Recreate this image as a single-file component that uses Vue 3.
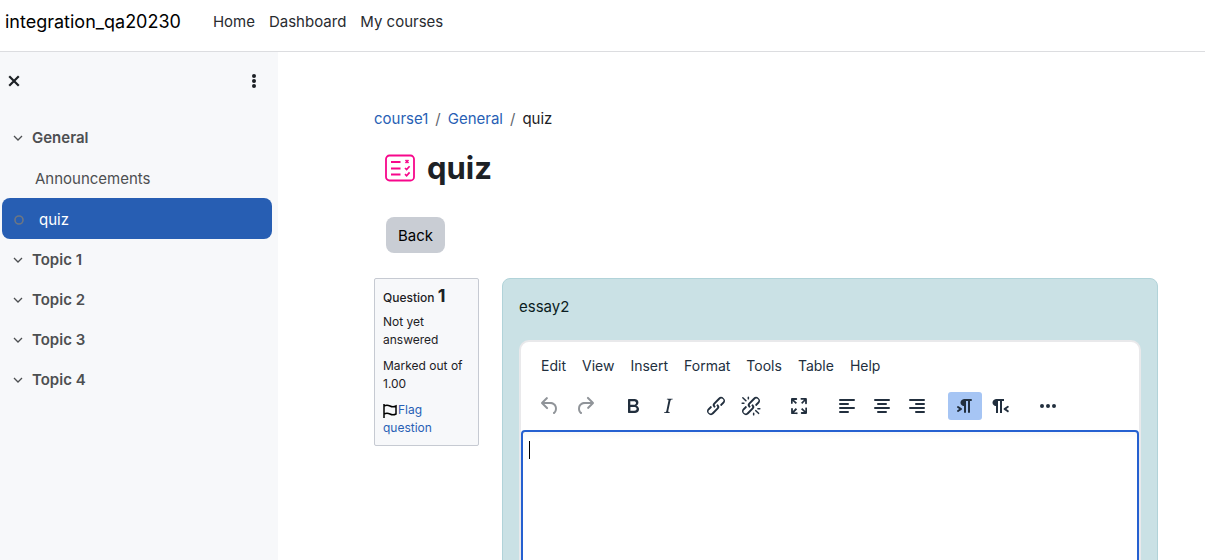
<script setup>
import { ref } from 'vue'

const answer = ref('')
const navLinks = ['Home', 'Dashboard', 'My courses']
const topics = ['Topic 1', 'Topic 2', 'Topic 3', 'Topic 4']
const menus = ['Edit', 'View', 'Insert', 'Format', 'Tools', 'Table', 'Help']

const chain =
  'M6.2 12.3a1 1 0 0 1 1.4 1.4l-2 2a2 2 0 1 0 2.6 2.8l4.8-4.8a1 1 0 0 0 0-1.4 1 1 0 1 1 1.4-1.3 2.9 2.9 0 0 1 0 4L9.6 20a3.9 3.9 0 0 1-5.5-5.5l2-2Zm11.6-.6a1 1 0 0 1-1.4-1.4l2-2a2 2 0 1 0-2.6-2.8L11 10.3a1 1 0 0 0 0 1.4A1 1 0 1 1 9.6 13a2.9 2.9 0 0 1 0-4L14.4 4a3.9 3.9 0 0 1 5.5 5.5l-2 2Z'

const groups = [
  [
    { name: 'Undo', disabled: true, d: 'M6.4 8H12c3.7 0 6.2 2 6.8 5.1.6 2.7-.4 5.6-2.3 6.8a1 1 0 0 1-1-1.8c1.1-.6 1.8-2.7 1.4-4.6-.5-2.1-2.1-3.5-4.9-3.5H6.4l3.3 3.3a1 1 0 1 1-1.4 1.4l-5-5a1 1 0 0 1 0-1.4l5-5a1 1 0 0 1 1.4 1.4L6.4 8Z' },
    { name: 'Redo', disabled: true, d: 'M17.6 10H12c-2.8 0-4.4 1.4-4.9 3.5-.4 2 .3 4 1.4 4.6a1 1 0 1 1-1 1.8c-2-1.2-2.9-4.1-2.3-6.8.6-3 3-5.1 6.8-5.1h5.6l-3.3-3.3a1 1 0 1 1 1.4-1.4l5 5a1 1 0 0 1 0 1.4l-5 5a1 1 0 0 1-1.4-1.4l3.3-3.3Z' },
  ],
  [
    { name: 'Bold', d: 'M7.8 19c-.3 0-.5 0-.6-.2l-.2-.5V5.7c0-.2 0-.4.2-.5l.6-.2h5c1.5 0 2.7.3 3.5 1 .7.6 1.1 1.4 1.1 2.5a3 3 0 0 1-.6 1.9c-.4.6-1 1-1.6 1.2.4.1.9.3 1.3.6s.8.7 1 1.2c.4.4.5 1 .5 1.6 0 1.3-.4 2.3-1.3 3-.8.7-2.1 1-3.8 1H7.8Zm5-8.3c.6 0 1.2-.1 1.6-.5.4-.3.6-.7.6-1.3 0-1.1-.8-1.7-2.3-1.7H9.3v3.5h3.4Zm.5 6c.7 0 1.3-.1 1.7-.4.4-.4.6-.9.6-1.5s-.2-1-.7-1.4c-.4-.3-1-.4-2-.4H9.4v3.8h4Z' },
    { name: 'Italic', d: 'm16.7 4.7-.1.9h-.3c-.6 0-1 0-1.4.3-.3.3-.4.6-.5 1.1l-2.1 9.8v.6c0 .5.4.8 1.4.8h.2l-.2.8H8l.2-.8h.2c1.1 0 1.8-.5 2-1.5l2-9.8.1-.5c0-.6-.4-.8-1.4-.8h-.3l.2-.9h5.8Z' },
  ],
  [
    { name: 'Link', d: chain },
    { name: 'Unlink', d: chain + 'M7.6 6.3a.8.8 0 0 1-1 1.1L3.3 4.2a.7.7 0 1 1 1-1l3.2 3.1ZM5.1 8.6a.8.8 0 0 1 0 1.5H3a.8.8 0 0 1 0-1.5H5Zm5-3.5a.8.8 0 0 1-1.5 0V3a.8.8 0 0 1 1.5 0V5Zm6 11.8a.8.8 0 0 1 1-1l3.2 3.2a.8.8 0 0 1-1 1L16 17Zm-2.2 2a.8.8 0 0 1 1.5 0V21a.8.8 0 0 1-1.5 0V19Zm5-3.5a.7.7 0 1 1 0-1.5H21a.8.8 0 0 1 0 1.5H19Z' },
  ],
  [
    { name: 'Fullscreen', d: 'm15.3 10-1.2-1.3 2.9-3h-2.3a.9.9 0 1 1 0-1.7H19c.5 0 .9.4.9.9v4.4a.9.9 0 1 1-1.8 0V7l-2.9 3Zm0 4 3 3v-2.3a.9.9 0 1 1 1.7 0V19c0 .5-.4.9-.9.9h-4.4a.9.9 0 1 1 0-1.8H17l-3-2.9 1.3-1.2ZM10 15.4l-2.9 3h2.3a.9.9 0 1 1 0 1.7H5a.9.9 0 0 1-.9-.9v-4.4a.9.9 0 1 1 1.8 0V17l2.9-3 1.2 1.3ZM8.7 10 5.7 7v2.3a.9.9 0 0 1-1.7 0V5c0-.5.4-.9.9-.9h4.4a.9.9 0 0 1 0 1.8H7l3 2.9-1.3 1.2Z' },
  ],
  [
    { name: 'Align left', d: 'M5 5h14a1 1 0 0 1 0 2H5a1 1 0 0 1 0-2Zm0 4h8a1 1 0 0 1 0 2H5a1 1 0 0 1 0-2Zm0 4h14a1 1 0 0 1 0 2H5a1 1 0 0 1 0-2Zm0 4h8a1 1 0 0 1 0 2H5a1 1 0 0 1 0-2Z' },
    { name: 'Align center', d: 'M5 5h14a1 1 0 0 1 0 2H5a1 1 0 0 1 0-2Zm3 4h8a1 1 0 0 1 0 2H8a1 1 0 0 1 0-2Zm-3 4h14a1 1 0 0 1 0 2H5a1 1 0 0 1 0-2Zm3 4h8a1 1 0 0 1 0 2H8a1 1 0 0 1 0-2Z' },
    { name: 'Align right', d: 'M5 5h14a1 1 0 0 1 0 2H5a1 1 0 0 1 0-2Zm6 4h8a1 1 0 0 1 0 2h-8a1 1 0 0 1 0-2Zm-6 4h14a1 1 0 0 1 0 2H5a1 1 0 0 1 0-2Zm6 4h8a1 1 0 0 1 0 2h-8a1 1 0 0 1 0-2Z' },
  ],
  [
    { name: 'Left to right', active: true, d: 'M11 5h7a1 1 0 0 1 0 2h-1v11a1 1 0 0 1-2 0V7h-2v11a1 1 0 0 1-2 0v-6c-.5 0-1 0-1.4-.3A3.4 3.4 0 0 1 7.8 10a3.3 3.3 0 0 1 0-2.8 3.4 3.4 0 0 1 1.8-1.8L11 5ZM4.4 16.2 6.2 15l-1.8-1.2a1 1 0 0 1 1.2-1.6l3 2a1 1 0 0 1 0 1.6l-3 2a1 1 0 1 1-1.2-1.6Z' },
    { name: 'Right to left', d: 'M8 5h8v2h-2v12h-2V7h-2v12H8v-7c-.5 0-1 0-1.4-.3A3.4 3.4 0 0 1 4.8 10a3.3 3.3 0 0 1 0-2.8 3.4 3.4 0 0 1 1.8-1.8L8 5Zm12 11.2a1 1 0 1 1-1 1.6l-3-2a1 1 0 0 1 0-1.6l3-2a1 1 0 1 1 1 1.6L18.4 15l1.8 1.2Z' },
  ],
  [
    { name: 'More', d: 'M6 10a2 2 0 1 0 0 4 2 2 0 0 0 0-4Zm6 0a2 2 0 1 0 0 4 2 2 0 0 0 0-4Zm6 0a2 2 0 1 0 0 4 2 2 0 0 0 0-4Z' },
  ],
]
</script>

<template>
  <div class="page">
    <header class="topbar">
      <a class="brand" href="#">integration_qa20230</a>
      <nav class="nav">
        <a v-for="link in navLinks" :key="link" href="#">{{ link }}</a>
      </nav>
    </header>
    <div class="body">
      <aside class="drawer">
        <div class="drawer-head">
          <button type="button" class="plain" aria-label="Close course index">
            <svg width="12" height="12" viewBox="0 0 12 12"><path d="M2 2l8 8M10 2l-8 8" fill="none" stroke="#1d2125" stroke-width="2.2" stroke-linecap="square" /></svg>
          </button>
          <button type="button" class="plain" aria-label="Course index options">
            <svg width="6" height="16" viewBox="0 0 6 16" fill="#1d2125"><circle cx="3" cy="3" r="2" /><circle cx="3" cy="8" r="2" /><circle cx="3" cy="13" r="2" /></svg>
          </button>
        </div>
        <nav class="index" aria-label="Course index">
          <a class="section" href="#">
            <svg width="12" height="12" viewBox="0 0 12 12"><path d="M2 4l4 4 4-4" /></svg>General
          </a>
          <a class="item" href="#">Announcements</a>
          <a class="item current" href="#">
            <svg width="12" height="12" viewBox="0 0 12 12"><circle cx="6" cy="6" r="4" /></svg>quiz
          </a>
          <a v-for="topic in topics" :key="topic" class="section" href="#">
            <svg width="12" height="12" viewBox="0 0 12 12"><path d="M2 4l4 4 4-4" /></svg>{{ topic }}
          </a>
        </nav>
      </aside>
      <main class="content">
        <nav class="crumbs" aria-label="Breadcrumb">
          <a href="#">course1</a><span class="slash">/</span><a href="#">General</a><span class="slash">/</span><span>quiz</span>
        </nav>
        <div class="title">
          <svg width="30" height="28" viewBox="0 0 30 28" fill="none" stroke="#f7078b">
            <rect x="1" y="1.5" width="28" height="25" rx="3.5" stroke-width="1.8" />
            <path d="M6 8h9.5M6 14.5h9.5M6 20.5h9.5" stroke-width="1.8" />
            <path d="M20.5 6l3 3M23.5 6l-3 3" stroke-width="1.6" />
            <path d="M20 14l1.6 1.6 3-3.4M20 20.2l1.6 1.6 3-3.4" stroke-width="1.7" />
          </svg>
          <h1>quiz</h1>
        </div>
        <button type="button" class="back">Back</button>
        <div class="question">
          <section class="info">
            <h2>Question <b>1</b></h2>
            <p>Not yet answered</p>
            <p>Marked out of 1.00</p>
            <a href="#"><svg width="15" height="14" viewBox="0 0 15 14" fill="none" stroke="#000" stroke-width="1.5"><path d="M1 0v14M1 2c2-1 4-1 6 0s4 1 6 0v8c-2 1-4 1-6 0s-4-1-6 0" /></svg>Flag question</a>
          </section>
          <section class="formulation">
            <label for="answer">essay2</label>
            <div class="editor">
              <div class="menubar">
                <button v-for="menu in menus" :key="menu" type="button">{{ menu }}</button>
              </div>
              <div class="toolbar">
                <div v-for="(group, i) in groups" :key="i" class="group">
                  <button v-for="tool in group" :key="tool.name" type="button" :class="{ active: tool.active }" :disabled="tool.disabled" :aria-label="tool.name">
                    <svg width="24" height="24" viewBox="0 0 24 24"><path :d="tool.d" fill-rule="evenodd" /></svg>
                  </button>
                </div>
              </div>
              <div class="edit-area">
                <textarea id="answer" v-model="answer"></textarea>
                <span v-if="!answer" class="caret"></span>
              </div>
            </div>
          </section>
        </div>
      </main>
    </div>
  </div>
</template>

<style>
body {
  margin: 0;
}
</style>

<style scoped>
* {
  box-sizing: border-box;
}
.page {
  height: 100vh;
  overflow: hidden;
  display: flex;
  flex-direction: column;
  background: #fff;
  color: #1d2125;
  font: 15px/24px Inter, "Liberation Sans", sans-serif;
}
a {
  text-decoration: none;
}
button {
  font: inherit;
  color: inherit;
  border: 0;
  padding: 0;
  background: none;
}
.topbar {
  flex: none;
  display: flex;
  align-items: center;
  gap: 32px;
  height: 52px;
  padding: 0 5px 8px;
  border-bottom: 1px solid #dcdde0;
}
.brand {
  font-size: 18px;
  color: #000;
}
.nav {
  display: flex;
  gap: 14px;
}
.nav a {
  color: #282b2f;
}
.body {
  flex: 1;
  min-height: 0;
  display: flex;
}
.drawer {
  flex: none;
  width: 278px;
  background: #f7f8fa;
}
.drawer-head {
  display: flex;
  justify-content: space-between;
  align-items: center;
  height: 58px;
  padding: 0 21px 0 8px;
}
.plain {
  display: flex;
}
.index {
  display: flex;
  flex-direction: column;
  padding: 7px 6px 0 2px;
}
.index a {
  display: flex;
  align-items: center;
  height: 41px;
  padding-top: 2px;
  color: #4d4f51;
}
.index svg {
  fill: none;
  stroke: #4d4f51;
  stroke-width: 1.3;
}
.index .section {
  height: 40px;
  gap: 8px;
  padding-left: 10px;
  font-weight: 600;
}
.index .item {
  padding-left: 33px;
}
.index .current {
  gap: 14px;
  padding-left: 11px;
  border-radius: 8px;
  background: #275eb3;
  color: #fff;
}
.index .current svg {
  stroke: #6d7683;
  stroke-width: 1.6;
}
.content {
  flex: 1;
  min-width: 0;
  padding: 55px 47px 0 96px;
}
.crumbs {
  display: flex;
  gap: 7px;
}
.crumbs a,
.info a {
  color: #285fb5;
}
.slash {
  color: #5f666d;
}
.title {
  display: flex;
  align-items: center;
  gap: 12px;
  padding: 18px 0 0 11px;
}
h1 {
  margin: 0;
  font-size: 31px;
  line-height: 38px;
  font-weight: 700;
}
.back {
  display: block;
  height: 36px;
  margin: 30px 0 25px 12px;
  padding: 2px 12px 0;
  border-radius: 8px;
  background: #c9cdd4;
  color: #000;
}
.question {
  display: flex;
  align-items: flex-start;
  gap: 23px;
}
.info {
  flex: none;
  width: 105px;
  padding: 7px 8px 8px;
  border: 1px solid #c6cad2;
  border-radius: 2px;
  background: #f7f8fa;
  font-size: 12px;
  line-height: 18px;
}
.info h2 {
  margin: 0 0 5px;
  font-size: 12px;
  line-height: 20px;
  font-weight: 500;
}
.info h2 b {
  font-size: 18px;
  font-weight: 700;
}
.info p {
  margin: 0 0 8px;
}
.info svg {
  vertical-align: -4px;
}
.formulation {
  flex: 1;
  min-width: 0;
  padding: 16px;
  border: 1px solid #b1d3d9;
  border-radius: 8px;
  background: #cae1e5;
}
.formulation label {
  display: block;
  color: #0a1d22;
}
.editor {
  margin-top: 21px;
  border: 2px solid #e9e9eb;
  border-radius: 10px;
  background: #fff;
  color: #222f3e;
}
.menubar {
  display: flex;
  padding: 10px 12px 0;
  font-size: 14px;
  line-height: 28px;
}
.menubar button {
  padding: 0 8px;
}
.toolbar {
  display: flex;
  gap: 14px;
  padding: 12px 12px 10px;
}
.group {
  display: flex;
  gap: 1px;
}
.group button {
  display: flex;
  align-items: center;
  justify-content: center;
  width: 34px;
  height: 28px;
  border-radius: 3px;
  fill: #222f3e;
}
.group button:disabled {
  fill: #909499;
}
.group .active {
  background: #a6c5f4;
}
.edit-area {
  position: relative;
}
textarea {
  display: block;
  width: 100%;
  height: 230px;
  padding: 8px 6px;
  border: 2px solid #2560d0;
  border-radius: 4px;
  outline: none;
  resize: none;
  background: linear-gradient(#f8f8f8, #fff 8px);
  font: inherit;
  caret-color: transparent;
}
.caret {
  position: absolute;
  left: 8px;
  top: 11px;
  width: 1px;
  height: 18px;
  background: #000;
}
</style>
